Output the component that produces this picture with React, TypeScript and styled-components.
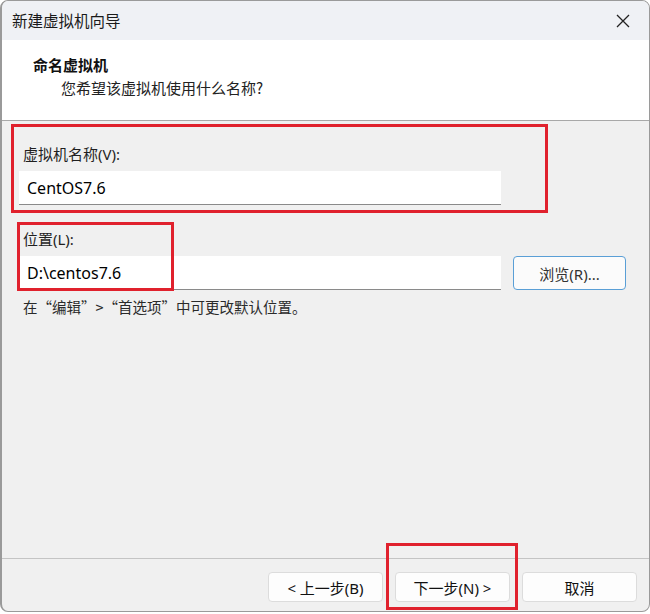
import styled, { createGlobalStyle } from "styled-components";

const GlobalStyle = createGlobalStyle`
  html, body {
    margin: 0;
    padding: 0;
    background: #ffffff;
  }
  body {
    font-family: "Noto Sans", "Noto Sans CJK SC", sans-serif;
  }
`;

const Window = styled.div`
  position: relative;
  box-sizing: border-box;
  width: 650px;
  height: 612px;
  border: 1px solid #9a9a9a;
  border-left-width: 2px;
  border-radius: 8px;
  overflow: hidden;
  display: flex;
  flex-direction: column;
  background: #f0f0f0;
`;

const TitleBar = styled.div`
  height: 39px;
  background: #eff1f5;
  display: flex;
  align-items: center;
  justify-content: space-between;
  padding: 0 10px 0 10px;
  font-size: 15.5px;
  color: #1a1a1a;
`;

const CloseButton = styled.div`
  width: 28px;
  height: 28px;
  display: flex;
  align-items: center;
  justify-content: center;
  margin-right: 2px;
`;

const Header = styled.div`
  height: 81px;
  box-sizing: border-box;
  background: #ffffff;
  border-bottom: 1px solid #a8a8a8;
  padding: 14px 0 0 31px;
`;

const HeaderTitle = styled.div`
  font-family: "Noto Sans CJK SC", sans-serif;
  font-weight: 700;
  font-size: 15px;
  line-height: 22px;
  color: #111;
`;

const HeaderSub = styled.div`
  font-family: "Noto Sans CJK SC", sans-serif;
  font-size: 15px;
  line-height: 22px;
  color: #222;
  padding-left: 28px;
  margin-top: 1px;
`;

const Body = styled.div`
  flex: 1;
  padding: 23px 0 0 17px;
  display: flex;
  flex-direction: column;
`;

const Label = styled.div<{ $gap?: number }>`
  font-size: 15px;
  line-height: 20px;
  color: #1f1f1f;
  padding-left: 4px;
  margin-top: ${(p) => p.$gap ?? 0}px;
  margin-bottom: 7px;
`;

const Row = styled.div`
  display: flex;
  align-items: center;
  gap: 12px;
`;

const TextBox = styled.div`
  box-sizing: border-box;
  width: 482px;
  height: 34px;
  background: #ffffff;
  border-bottom: 1px solid #8a8a8a;
  display: flex;
  align-items: center;
  padding-left: 8px;
  font-size: 16px;
  color: #000;
`;

const BrowseButton = styled.div`
  box-sizing: border-box;
  width: 113px;
  height: 34px;
  border: 1.5px solid #5a9fd6;
  border-radius: 4px;
  background: #fbfbfb;
  display: flex;
  align-items: center;
  justify-content: center;
  font-size: 15px;
  color: #333;
`;

const Hint = styled.div`
  margin-top: 7px;
  padding-left: 4px;
  font-family: "Noto Sans CJK SC", sans-serif;
  font-size: 14.5px;
  line-height: 20px;
  color: #2a2a2a;
`;

const Footer = styled.div`
  height: 53px;
  box-sizing: border-box;
  border-top: 1px solid #c4c4c4;
  display: flex;
  justify-content: flex-end;
  align-items: flex-start;
  padding: 13px 12px 0 0;
  gap: 12px;
`;

const DialogButton = styled.div`
  box-sizing: border-box;
  width: 115px;
  height: 30px;
  background: #fdfdfd;
  border: 1px solid #dcdcdc;
  border-radius: 4px;
  display: flex;
  align-items: center;
  justify-content: center;
  font-size: 15px;
  color: #111;
`;

const Mark = styled.div<{ $x: number; $y: number; $w: number; $h: number }>`
  position: absolute;
  box-sizing: border-box;
  left: ${(p) => p.$x}px;
  top: ${(p) => p.$y}px;
  width: ${(p) => p.$w}px;
  height: ${(p) => p.$h}px;
  border: 3px solid #e0212d;
  pointer-events: none;
`;

export default function App() {
  return (
    <>
      <GlobalStyle />
      <Window>
        <TitleBar>
          <span>新建虚拟机向导</span>
          <CloseButton>
            <svg width="16" height="16" viewBox="0 0 16 16">
              <path d="M2 2L14 14M14 2L2 14" stroke="#222" strokeWidth="1.3" />
            </svg>
          </CloseButton>
        </TitleBar>
        <Header>
          <HeaderTitle>命名虚拟机</HeaderTitle>
          <HeaderSub>您希望该虚拟机使用什么名称?</HeaderSub>
        </Header>
        <Body>
          <Label>虚拟机名称(V):</Label>
          <TextBox>CentOS7.6</TextBox>
          <Label $gap={24}>位置(L):</Label>
          <Row>
            <TextBox>D:\centos7.6</TextBox>
            <BrowseButton>浏览(R)...</BrowseButton>
          </Row>
          <Hint>在“编辑”&gt;“首选项”中可更改默认位置。</Hint>
        </Body>
        <Footer>
          <DialogButton>&lt; 上一步(B)</DialogButton>
          <DialogButton>下一步(N) &gt;</DialogButton>
          <DialogButton>取消</DialogButton>
        </Footer>
        <Mark $x={9} $y={123} $w={537} $h={89} />
        <Mark $x={15} $y={221} $w={157} $h={69} />
        <Mark $x={384} $y={542} $w={132} $h={67} />
      </Window>
    </>
  );
}
